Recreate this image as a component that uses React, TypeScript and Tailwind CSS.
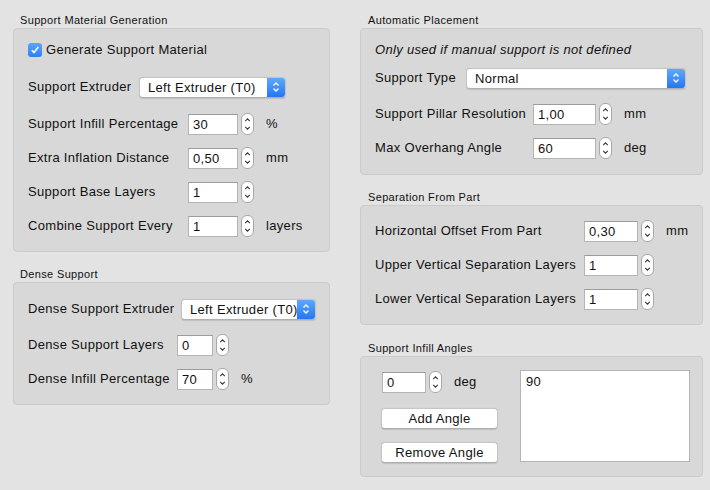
import React from 'react';

function Stepper() {
  return (
    <svg width="13" height="22" viewBox="0 0 13 22" className="shrink-0">
      <rect x="0.5" y="0.5" width="12" height="21" rx="5.5" fill="#ffffff" stroke="#a8a8a8" />
      <path d="M4.2 8.2 L6.5 5.8 L8.8 8.2" fill="none" stroke="#3a3a3a" strokeWidth="1.1" />
      <path d="M4.2 13.8 L6.5 16.2 L8.8 13.8" fill="none" stroke="#3a3a3a" strokeWidth="1.1" />
    </svg>
  );
}

function Spin({ value, width, unit }: { value: string; width: string; unit?: string }) {
  return (
    <div className="flex items-center">
      <div
        className={`${width} h-[21px] bg-white border border-[#b4b4b4] border-t-[#9c9c9c] pl-[4px] leading-[20px] shrink-0`}
      >
        {value}
      </div>
      <div className="ml-[3px]">
        <Stepper />
      </div>
      {unit && <span className="ml-[12px]">{unit}</span>}
    </div>
  );
}

function Popup({ text, width }: { text: string; width: string }) {
  return (
    <div
      className={`${width} h-[21px] flex bg-white rounded-[4px] border border-[#c4c4c4] border-b-[#afafaf] shadow-[0_0.5px_1px_rgba(0,0,0,0.12)] overflow-hidden`}
    >
      <div className="flex-1 pl-[8px] leading-[19px] whitespace-nowrap overflow-hidden">{text}</div>
      <div className="w-[18px] h-full bg-gradient-to-b from-[#5ea9fb] to-[#2476f4] flex items-center justify-center shrink-0">
        <svg width="8" height="12" viewBox="0 0 8 12">
          <path d="M1.5 4.5 L4 2 L6.5 4.5" fill="none" stroke="#ffffff" strokeWidth="1.3" />
          <path d="M1.5 7.5 L4 10 L6.5 7.5" fill="none" stroke="#ffffff" strokeWidth="1.3" />
        </svg>
      </div>
    </div>
  );
}

function Title({ children, ml }: { children: React.ReactNode; ml: string }) {
  return (
    <div className={`h-[16px] leading-[16px] text-[11px] tracking-[0.35px] ${ml}`}>{children}</div>
  );
}

function Row({
  label,
  labelW,
  children,
  className = '',
}: {
  label: string;
  labelW: string;
  children: React.ReactNode;
  className?: string;
}) {
  return (
    <div className={`flex items-center h-[24px] ${className}`}>
      <span className={`${labelW} shrink-0 whitespace-nowrap`}>{label}</span>
      {children}
    </div>
  );
}

function Button({ children }: { children: React.ReactNode }) {
  return (
    <div className="w-[117px] h-[21px] bg-white rounded-[4px] border border-[#c6c6c6] border-b-[#acacac] shadow-[0_0.5px_1px_rgba(0,0,0,0.12)] text-center leading-[19px]">
      {children}
    </div>
  );
}

const box = 'bg-[#d8d8d8] border border-[#cbcbcb] rounded-[4px]';

export default function App() {
  return (
    <div className="w-[710px] h-[490px] bg-[#e3e3e3] flex gap-[30px] pl-[13px] pt-[12px] text-[13px] tracking-[0.32px] text-[#111111] font-['Liberation_Sans',Arial,sans-serif] overflow-hidden">
      {/* Left column */}
      <div className="w-[317px] flex flex-col">
        <Title ml="ml-[7px]">Support Material Generation</Title>
        <div className={`${box} pl-[14px] pt-[10px] pb-[13px]`}>
          <div className="flex items-center h-[21px]">
            <div className="w-[14px] h-[14px] rounded-[3px] bg-gradient-to-b from-[#5aa6fa] to-[#2e7ff5] flex items-center justify-center">
              <svg width="10" height="10" viewBox="0 0 10 10">
                <path d="M1.8 5.2 L4 7.6 L8.3 2" fill="none" stroke="#ffffff" strokeWidth="1.6" />
              </svg>
            </div>
            <span className="ml-[4px]">Generate Support Material</span>
          </div>
          <div className="flex items-center h-[22px] mt-[16px]">
            <span className="w-[111px] shrink-0">Support Extruder</span>
            <Popup text="Left Extruder (T0)" width="w-[147px]" />
          </div>
          <Row label="Support Infill Percentage" labelW="w-[160px]" className="mt-[14px]">
            <Spin value="30" width="w-[50px]" unit="%" />
          </Row>
          <Row label="Extra Inflation Distance" labelW="w-[160px]" className="mt-[10px]">
            <Spin value="0,50" width="w-[50px]" unit="mm" />
          </Row>
          <Row label="Support Base Layers" labelW="w-[160px]" className="mt-[10px]">
            <Spin value="1" width="w-[50px]" />
          </Row>
          <Row label="Combine Support Every" labelW="w-[160px]" className="mt-[10px]">
            <Spin value="1" width="w-[50px]" unit="layers" />
          </Row>
        </div>

        <div className="mt-[14px]">
          <Title ml="ml-[7px]">Dense Support</Title>
        </div>
        <div className={`${box} pl-[14px] pt-[15px] pb-[13px]`}>
          <div className="flex items-center h-[22px]">
            <span className="w-[153px] shrink-0">Dense Support Extruder</span>
            <Popup text="Left Extruder (T0)" width="w-[135px]" />
          </div>
          <Row label="Dense Support Layers" labelW="w-[149px]" className="mt-[13px]">
            <Spin value="0" width="w-[36px]" />
          </Row>
          <Row label="Dense Infill Percentage" labelW="w-[149px]" className="mt-[10px]">
            <Spin value="70" width="w-[36px]" unit="%" />
          </Row>
        </div>
      </div>

      {/* Right column */}
      <div className="w-[343px] flex flex-col">
        <Title ml="ml-[8px]">Automatic Placement</Title>
        <div className={`${box} pl-[14px] pt-[13px] pb-[14px]`}>
          <div className="h-[16px] leading-[16px] italic">Only used if manual support is not defined</div>
          <div className="flex items-center h-[22px] mt-[9px]">
            <span className="w-[91px] shrink-0">Support Type</span>
            <Popup text="Normal" width="w-[220px]" />
          </div>
          <Row label="Support Pillar Resolution" labelW="w-[158px]" className="mt-[13px]">
            <Spin value="1,00" width="w-[63px]" unit="mm" />
          </Row>
          <Row label="Max Overhang Angle" labelW="w-[158px]" className="mt-[10px]">
            <Spin value="60" width="w-[63px]" unit="deg" />
          </Row>
        </div>

        <div className="mt-[14px]">
          <Title ml="ml-[8px]">Separation From Part</Title>
        </div>
        <div className={`${box} pl-[14px] pt-[13px] pb-[13px]`}>
          <Row label="Horizontal Offset From Part" labelW="w-[209px]">
            <Spin value="0,30" width="w-[54px]" unit="mm" />
          </Row>
          <Row label="Upper Vertical Separation Layers" labelW="w-[209px]" className="mt-[10px]">
            <Spin value="1" width="w-[54px]" />
          </Row>
          <Row label="Lower Vertical Separation Layers" labelW="w-[209px]" className="mt-[10px]">
            <Spin value="1" width="w-[54px]" />
          </Row>
        </div>

        <div className="mt-[15px]">
          <Title ml="ml-[8px]">Support Infill Angles</Title>
        </div>
        <div className={`${box} pl-[20px] pt-[13px] pb-[13px] flex items-start`}>
          <div className="flex flex-col pt-[1px]">
            <div className="flex items-center h-[22px] ml-[1px]">
              <Spin value="0" width="w-[44px]" unit="deg" />
            </div>
            <div className="mt-[15px]">
              <Button>Add Angle</Button>
            </div>
            <div className="mt-[13px]">
              <Button>Remove Angle</Button>
            </div>
          </div>
          <div className="ml-[22px] w-[170px] h-[92px] bg-white border border-[#b4b4b4] pl-[5px] pt-[2px] leading-[18px]">
            90
          </div>
        </div>
      </div>
    </div>
  );
}
